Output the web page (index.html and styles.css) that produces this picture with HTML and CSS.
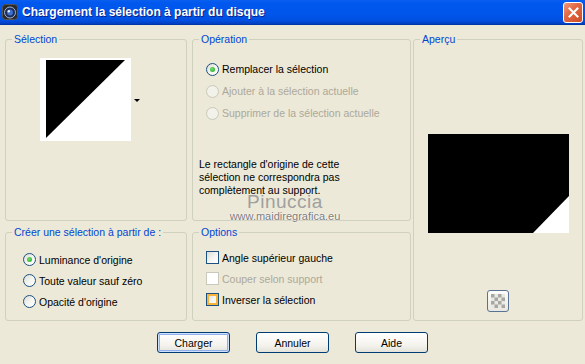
FILE: index.html
```html
<!DOCTYPE html>
<html lang="fr">
<head>
    <meta charset="UTF-8">
    <meta name="viewport" content="width=device-width, initial-scale=1.0">
    <title>Chargement la sélection à partir du disque</title>
    <link rel="stylesheet" href="styles.css">
</head>
<body>

<div class="window">
    <div class="titlebar">
        <svg class="app-icon" width="16" height="16" viewBox="0 0 16 16">
            <rect x="0.5" y="0.5" width="15" height="15" rx="3" fill="#2a2a2a" stroke="#555"/>
            <circle cx="8" cy="8.5" r="5.5" fill="#1b2f5a" stroke="#9fb3d6" stroke-width="1"/>
            <circle cx="8" cy="8.5" r="3" fill="#3c6fd0"/>
            <circle cx="6.8" cy="7.3" r="1.2" fill="#e8f0ff"/>
        </svg>
        <span class="title">Chargement la sélection à partir du disque</span>
        <div class="close">
            <svg width="11" height="11" viewBox="0 0 11 11">
                <path d="M1.5 1.5 L9.5 9.5 M9.5 1.5 L1.5 9.5" stroke="#fff" stroke-width="2" stroke-linecap="square"/>
            </svg>
        </div>
    </div>

    <div class="content">
        <div class="groups">
            <fieldset class="group g-selection">
                <legend>Sélection</legend>
                <div class="thumb-row">
                    <svg class="thumb" width="91" height="83" viewBox="0 0 91 83">
                        <rect width="91" height="83" fill="#fff"/>
                        <polygon points="6,2 85,2 6,80" fill="#000"/>
                    </svg>
                    <span class="drop-arrow"></span>
                </div>
            </fieldset>

            <fieldset class="group g-operation">
                <legend>Opération</legend>
                <div class="choices op-choices">
                    <label class="choice"><span class="radio checked"></span>Remplacer la sélection</label>
                    <label class="choice disabled"><span class="radio"></span>Ajouter à la sélection actuelle</label>
                    <label class="choice disabled"><span class="radio"></span>Supprimer de la sélection actuelle</label>
                </div>
                <p class="note">Le rectangle d'origine de cette<br>sélection ne correspondra pas<br>complètement au support.</p>
            </fieldset>

            <fieldset class="group g-preview">
                <legend>Aperçu</legend>
                <svg class="preview" width="141" height="99" viewBox="0 0 141 99">
                    <rect width="141" height="99" fill="#000"/>
                    <polygon points="141,62 141,99 105,99" fill="#fff"/>
                </svg>
                <div class="trans-btn">
                    <svg width="14" height="14" viewBox="0 0 14 14">
                        <rect width="14" height="14" fill="#e8e8e4"/>
                        <rect x="0" y="0" width="3.5" height="3.5" fill="#a8a8a0"/>
                        <rect x="7" y="0" width="3.5" height="3.5" fill="#a8a8a0"/>
                        <rect x="3.5" y="3.5" width="3.5" height="3.5" fill="#a8a8a0"/>
                        <rect x="10.5" y="3.5" width="3.5" height="3.5" fill="#a8a8a0"/>
                        <rect x="0" y="7" width="3.5" height="3.5" fill="#a8a8a0"/>
                        <rect x="7" y="7" width="3.5" height="3.5" fill="#a8a8a0"/>
                        <rect x="3.5" y="10.5" width="3.5" height="3.5" fill="#a8a8a0"/>
                        <rect x="10.5" y="10.5" width="3.5" height="3.5" fill="#a8a8a0"/>
                    </svg>
                </div>
            </fieldset>

            <fieldset class="group g-source">
                <legend>Créer une sélection à partir de :</legend>
                <div class="choices src-choices">
                    <label class="choice"><span class="radio checked"></span>Luminance d'origine</label>
                    <label class="choice"><span class="radio"></span>Toute valeur sauf zéro</label>
                    <label class="choice"><span class="radio"></span>Opacité d'origine</label>
                </div>
            </fieldset>

            <fieldset class="group g-options">
                <legend>Options</legend>
                <div class="choices opt-choices">
                    <label class="choice"><span class="check"></span>Angle supérieur gauche</label>
                    <label class="choice disabled"><span class="check"></span>Couper selon support</label>
                    <label class="choice"><span class="check hot"></span>Inverser la sélection</label>
                </div>
            </fieldset>
        </div>

        <div class="actions">
            <button class="btn default">Charger</button>
            <button class="btn">Annuler</button>
            <button class="btn">Aide</button>
        </div>
    </div>

    <div class="watermark">
        <span class="wm-name">Pinuccia</span>
        <span class="wm-url">www.maidiregrafica.eu</span>
    </div>
</div>

</body>
</html>
```

FILE: styles.css
```css
body {
    margin: 0;
    background: #ECE9D8;
    font-family: "Liberation Sans", Arial, sans-serif;
    font-size: 10.5px;
    color: #000;
}
.window {
    position: relative;
    width: 585px;
    height: 364px;
    overflow: hidden;
    background: #ECE9D8;
}

/* barre de titre */
.titlebar {
    height: 24px;
    display: flex;
    align-items: center;
    padding-left: 2px;
    background: linear-gradient(#0a5ff0 0%, #0058ee 12%, #0055ea 60%, #004fe0 85%, #003fbf 100%);
    border-bottom: 1px solid #0036a8;
}
.app-icon {
    flex: none;
}
.title {
    margin-left: 4px;
    font-weight: bold;
    font-size: 12px;
    color: #fff;
    text-shadow: 1px 1px 0 #0a1f8a;
    flex: 1;
}
.close {
    width: 20px;
    height: 21px;
    margin-right: 2px;
    box-sizing: border-box;
    border: 1px solid #fff;
    border-radius: 3px;
    background: linear-gradient(135deg, #f09a7c 0%, #e26a45 40%, #cc4a24 100%);
    display: flex;
    align-items: center;
    justify-content: center;
}

/* zone principale */
.content {
    padding: 8px 0 0 5px;
}
.groups {
    display: grid;
    grid-template-columns: 187px 221px 168px;
    grid-template-rows: 188px 95px;
    row-gap: 5px;
}
.group {
    margin: 0;
    padding: 0;
    min-width: 0;
    border: 1px solid #D0D0BF;
    border-radius: 3px;
}
.group legend {
    margin-left: 6px;
    padding: 0 2px;
    line-height: 13px;
    color: #0046D5;
}
.g-selection { width: 180px; }
.g-operation { width: 217px; }
.g-preview {
    width: 168px;
    grid-row: 1 / span 2;
    grid-column: 3;
    display: flex;
    flex-direction: column;
    align-items: center;
}
.g-source { width: 180px; }
.g-options { width: 217px; }

.thumb-row {
    display: flex;
    align-items: center;
    margin: 12px 0 0 34px;
}
.thumb {
    display: block;
}
.drop-arrow {
    width: 0;
    height: 0;
    margin-left: 3px;
    margin-top: 1px;
    border-left: 3px solid transparent;
    border-right: 3px solid transparent;
    border-top: 3px solid #000;
}

.choices {
    display: flex;
    flex-direction: column;
}
.choice {
    display: flex;
    align-items: center;
    height: 22px;
}
.choice.disabled {
    color: #ACA899;
}
.op-choices {
    margin: 12px 0 0 13px;
}
.src-choices {
    margin: 10px 0 0 17px;
}
.src-choices .choice,
.opt-choices .choice {
    height: 21px;
}
.opt-choices {
    margin: 8px 0 0 13px;
}

.radio {
    width: 13px;
    height: 13px;
    box-sizing: border-box;
    border: 1px solid #1C5180;
    border-radius: 50%;
    background: linear-gradient(135deg, #dcdcd5 0%, #f4f4f0 50%, #ffffff 100%);
    margin-right: 3px;
    display: flex;
    align-items: center;
    justify-content: center;
    flex: none;
}
.radio.checked::after {
    content: "";
    width: 5px;
    height: 5px;
    border-radius: 50%;
    background: radial-gradient(circle at 40% 40%, #6ee16e, #21a121);
}
.disabled .radio {
    border-color: #CAC8BB;
    background: #f2f1ea;
}
.check {
    width: 13px;
    height: 13px;
    box-sizing: border-box;
    border: 1px solid #1C5180;
    background: linear-gradient(135deg, #dcdcd5 0%, #f4f4f0 50%, #ffffff 100%);
    margin-right: 3px;
    flex: none;
}
.check.hot {
    box-shadow: inset 0 0 0 2px #f8b33a;
}
.disabled .check {
    border-color: #CAC8BB;
    background: #fff;
}

.note {
    margin: 34px 0 0 6px;
    line-height: 13px;
}

.preview {
    display: block;
    margin-top: 88px;
}
.trans-btn {
    width: 22px;
    height: 22px;
    box-sizing: border-box;
    margin-top: 57px;
    border: 1px solid #5a7296;
    border-radius: 3px;
    background: linear-gradient(#fdfdfb, #e8e7e0);
    display: flex;
    align-items: center;
    justify-content: center;
}

/* boutons */
.actions {
    display: flex;
    justify-content: center;
    gap: 26px;
    margin-top: 11px;
    padding-right: 5px;
}
.btn {
    width: 73px;
    height: 21px;
    padding: 0;
    font-family: inherit;
    font-size: 10.5px;
    color: #000;
    border: 1px solid #003C74;
    border-radius: 3px;
    background: linear-gradient(#ffffff 0%, #f5f4ef 60%, #e4e3da 100%);
}
.btn.default {
    box-shadow: inset 0 0 0 1px #cee0fb, inset 0 0 0 2px #8fb0ea;
}

/* filigrane */
.watermark {
    position: absolute;
    left: 222px;
    top: 193px;
    width: 126px;
    display: flex;
    flex-direction: column;
    align-items: center;
    gap: 1px;
    pointer-events: none;
}
.wm-name {
    font-size: 19px;
    line-height: 17px;
    color: #a0a0a0;
    letter-spacing: 0.5px;
}
.wm-url {
    font-size: 11px;
    line-height: 11px;
    color: #7c7c7c;
    text-shadow: 0 0 2px #fff, 0 0 1px #fff;
}
```
